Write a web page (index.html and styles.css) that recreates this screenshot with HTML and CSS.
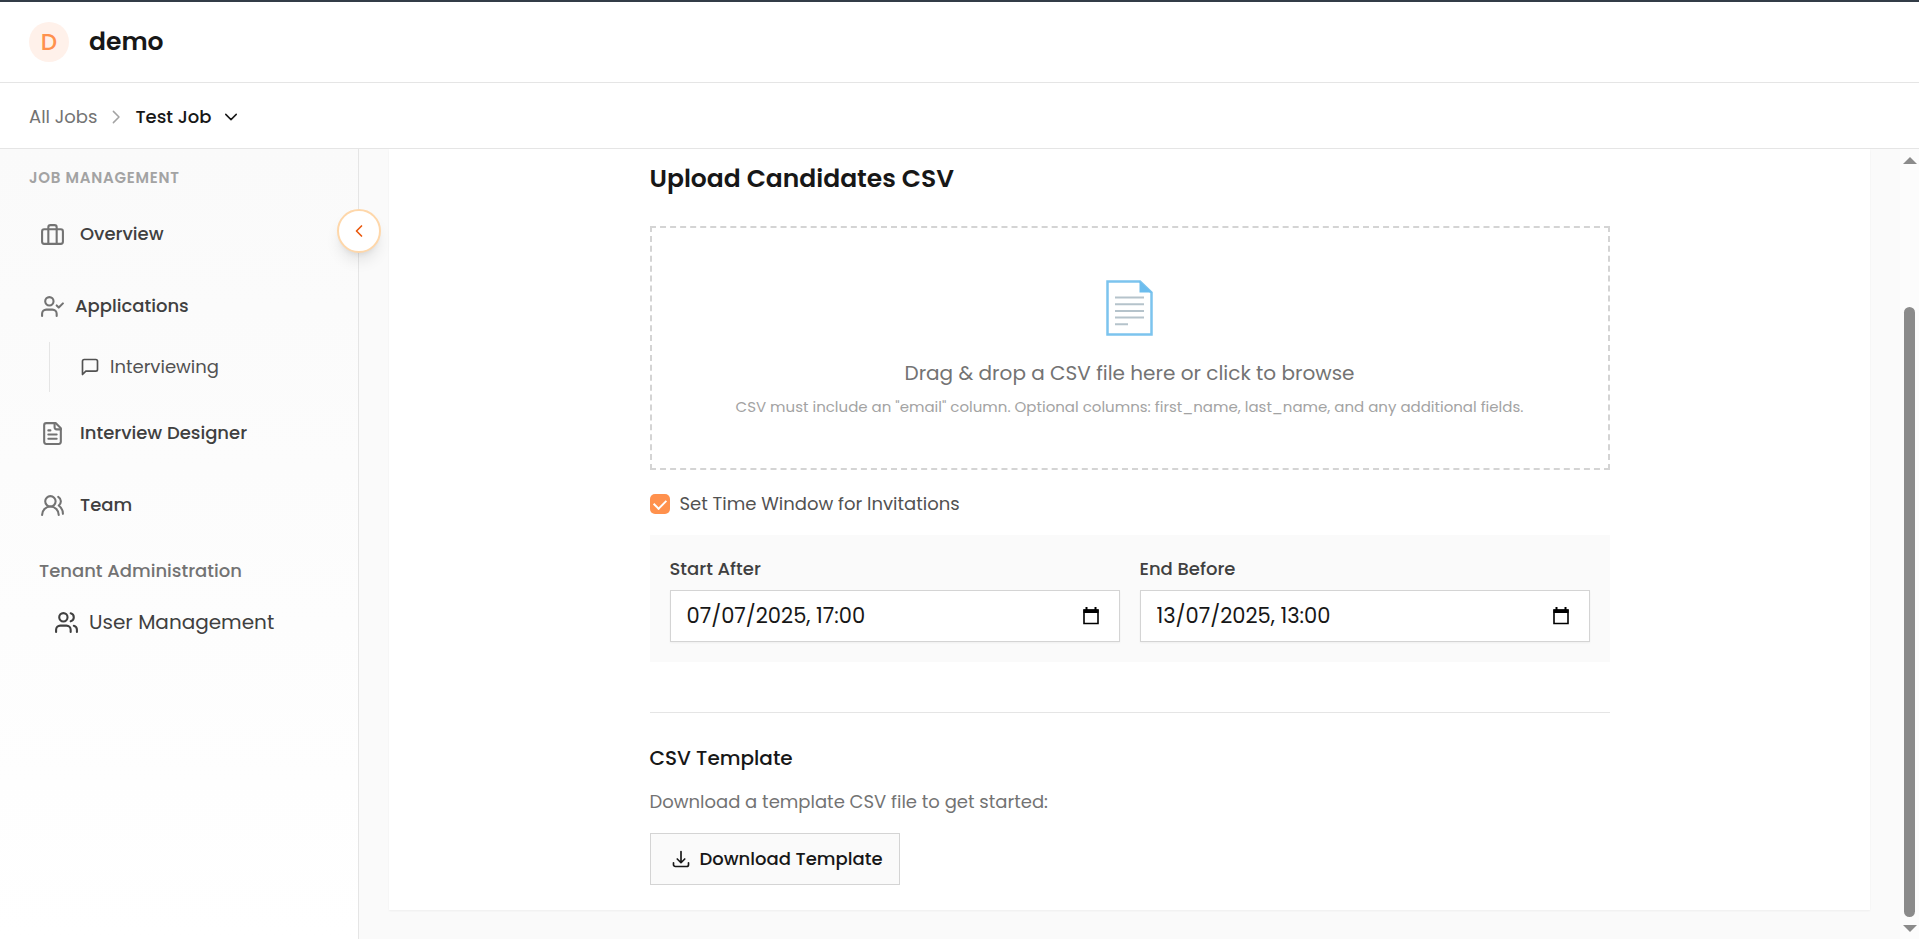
FILE: index.html
```html
<!DOCTYPE html>
<html lang="en">
<head>
<meta charset="utf-8">
<title>Test Job – Upload Candidates</title>
<link rel="stylesheet" href="styles.css">
</head>
<body>
<div class="app">
  <header class="topbar">
    <span class="avatar">D</span>
    <span class="tenant">demo</span>
  </header>

  <nav class="breadcrumb" aria-label="Breadcrumb">
    <a class="crumb" href="#jobs">All Jobs</a>
    <svg class="icon icon-sm crumb-sep" viewBox="0 0 24 24"><path d="m8.500 4.500 7.500 7.500-7.500 7.500"/></svg>
    <button class="crumb-current" type="button">
      Test Job
      <svg class="icon icon-sm" viewBox="0 0 24 24"><path d="m5 8.500 7 7 7-7"/></svg>
    </button>
  </nav>

  <div class="body">
    <aside class="sidebar">
      <h2 class="section-title">JOB MANAGEMENT</h2>
      <nav class="menu" aria-label="Job management">
        <a class="item" href="#overview">
          <svg class="icon" viewBox="0 0 24 24"><rect x="2" y="7" width="20" height="14" rx="2"/><path d="M16 21V5a2 2 0 0 0-2-2h-4a2 2 0 0 0-2 2v16"/></svg>
          Overview
        </a>
        <div class="group">
          <a class="item item-tight" href="#applications">
            <svg class="icon" viewBox="0 0 24 24"><path d="m16 11 2 2 4-4"/><path d="M16 21v-2a4 4 0 0 0-4-4H6a4 4 0 0 0-4 4v2"/><circle cx="9" cy="7" r="4"/></svg>
            Applications
          </a>
          <div class="submenu">
            <a class="subitem" href="#interviewing">
              <svg class="icon icon-md" viewBox="0 0 24 24"><path d="M21 15a2 2 0 0 1-2 2H7l-4 4V5a2 2 0 0 1 2-2h14a2 2 0 0 1 2 2z"/></svg>
              Interviewing
            </a>
          </div>
        </div>
        <a class="item" href="#designer">
          <svg class="icon" viewBox="0 0 24 24"><path d="M15 2H6a2 2 0 0 0-2 2v16a2 2 0 0 0 2 2h12a2 2 0 0 0 2-2V7Z"/><path d="M14 2v4a2 2 0 0 0 2 2h4"/><path d="M10 9H8"/><path d="M16 13H8"/><path d="M16 17H8"/></svg>
          Interview Designer
        </a>
        <a class="item" href="#team">
          <svg class="icon" viewBox="0 0 24 24"><path d="M18 21a8 8 0 0 0-16 0"/><circle cx="10" cy="8" r="5"/><path d="M22 20c0-3.370-2-6.500-4-8a5 5 0 0 0-.45-8.300"/></svg>
          Team
        </a>
      </nav>
      <h2 class="admin-title">Tenant Administration</h2>
      <a class="admin-item" href="#users">
        <svg class="icon" viewBox="0 0 24 24"><path d="M16 21v-2a4 4 0 0 0-4-4H6a4 4 0 0 0-4 4v2"/><circle cx="9" cy="7" r="4"/><path d="M22 21v-2a4 4 0 0 0-3-3.870"/><path d="M16 3.130a4 4 0 0 1 0 7.750"/></svg>
        User Management
      </a>
      <button class="collapse" type="button" aria-label="Collapse sidebar">
        <svg class="icon icon-md" viewBox="0 0 24 24"><path d="m15 18-6-6 6-6"/></svg>
      </button>
    </aside>

    <main class="main">
      <section class="card">
        <div class="content">
          <h1 class="title">Upload Candidates CSV</h1>

          <button class="dropzone" type="button">
            <svg class="doc" viewBox="0 0 47 56"><path d="M1.500 1.500H34L45.500 12.500V54.500H1.500Z" fill="#fff" stroke="#7cc4ee" stroke-width="2.500"/><path d="M33.500 1V12.500H46Z" fill="#6cbdee"/><path d="M9 17.500H38M9 24.200H38M9 30.900H38M9 37.600H38M9 44.300H22" stroke="#b5c3cb" stroke-width="2" fill="none"/></svg>
            <span class="drop-text">Drag &amp; drop a CSV file here or click to browse</span>
            <span class="drop-hint">CSV must include an "email" column. Optional columns: first_name, last_name, and any additional fields.</span>
          </button>

          <div class="check-row">
            <input class="check" type="checkbox" id="window" checked>
            <label for="window">Set Time Window for Invitations</label>
          </div>

          <div class="window">
            <div class="field">
              <label class="field-label" for="start">Start After</label>
              <div class="control">
                <input class="date" type="text" id="start" value="07/07/2025, 17:00">
                <button class="picker" type="button" aria-label="Pick start date"><svg class="cal" viewBox="0 0 16 18"><path d="M1 3H15V16.500H1Z" fill="none" stroke="#000" stroke-width="1.600"/><path d="M.5 2.500h15V6H.5ZM2.500 0h2v3h-2ZM11.500 0h2v3h-2Z" fill="#000"/></svg></button>
              </div>
            </div>
            <div class="field">
              <label class="field-label" for="end">End Before</label>
              <div class="control">
                <input class="date" type="text" id="end" value="13/07/2025, 13:00">
                <button class="picker" type="button" aria-label="Pick end date"><svg class="cal" viewBox="0 0 16 18"><path d="M1 3H15V16.500H1Z" fill="none" stroke="#000" stroke-width="1.600"/><path d="M.5 2.500h15V6H.5ZM2.500 0h2v3h-2ZM11.500 0h2v3h-2Z" fill="#000"/></svg></button>
              </div>
            </div>
          </div>

          <section class="template">
            <h2 class="template-title">CSV Template</h2>
            <p class="template-text">Download a template CSV file to get started:</p>
            <button class="download" type="button">
              <svg class="icon icon-md" viewBox="0 0 24 24"><path d="M3 16.500v2.250A2.250 2.250 0 0 0 5.250 21h13.500A2.250 2.250 0 0 0 21 18.750V16.500M16.500 12 12 16.500m0 0L7.500 12m4.500 4.500V3"/></svg>
              Download Template
            </button>
          </section>
        </div>
      </section>
    </main>

    <div class="scrollbar" aria-hidden="true">
      <span class="arrow arrow-up"></span>
      <span class="track"><span class="thumb"></span></span>
      <span class="arrow arrow-down"></span>
    </div>
  </div>
</div>
</body>
</html>
```
FILE: styles.css
```css
* { box-sizing: border-box; }

body {
  margin: 0;
  font-family: Poppins, Inter, sans-serif;
  font-size: 18px;
  line-height: 28px;
  color: #171717;
  background: #fff;
}

h1, h2, p { margin: 0; }
h1, h2 { font-weight: 500; }
a { color: inherit; text-decoration: none; }
button, input { font: inherit; color: inherit; }
button { padding: 0; border: 0; background: none; cursor: pointer; }

.app {
  display: flex;
  flex-direction: column;
  height: 100vh;
  overflow: hidden;
  border-top: 2px solid #323c47;
}

.icon {
  width: 25px;
  height: 25px;
  flex: none;
  fill: none;
  stroke: currentColor;
  stroke-width: 2;
  stroke-linecap: round;
  stroke-linejoin: round;
}
.icon-md { width: 20px; height: 20px; }
.icon-sm { width: 18px; height: 18px; }

/* Header */
.topbar {
  display: flex;
  align-items: center;
  gap: 20px;
  padding: 20px 29px;
  border-bottom: 1px solid #e5e5e5;
}
.avatar {
  width: 40px;
  height: 40px;
  line-height: 40px;
  border-radius: 50%;
  text-align: center;
  font-size: 23px;
  font-weight: 500;
  color: #ff914d;
  background: #fff1ea;
}
.tenant { font-size: 25px; line-height: 32px; font-weight: 600; }

.breadcrumb {
  display: flex;
  align-items: center;
  gap: 10px;
  padding: 20px 29px 17px;
  border-bottom: 1px solid #e5e5e5;
}
.crumb { color: #737373; }
.crumb-sep { color: #a3a3a3; }
.crumb-current {
  display: flex;
  align-items: center;
  gap: 10px;
  font-weight: 500;
}

.body { display: flex; flex: 1; min-height: 0; }

/* Sidebar */
.sidebar {
  position: relative;
  flex: none;
  width: 359px;
  padding: 15px 29px;
  border-right: 1px solid #e5e5e5;
  background: linear-gradient(#fafafa, #fff);
}
.section-title { font-size: 15px; font-weight: 600; letter-spacing: 0.05em; color: #a3a3a3; }
.menu { display: flex; flex-direction: column; gap: 20px; margin-top: 16px; }
.item {
  display: flex;
  align-items: center;
  gap: 15px;
  height: 52px;
  padding-left: 11px;
  font-weight: 500;
  color: #404040;
}
.item .icon { color: #737373; }
.item-tight { gap: 10px; }
.submenu {
  margin: 10px 0 -5px 20px;
  padding: 11px 0 11px 30px;
  border-left: 1px solid #e5e5e5;
}
.subitem { display: flex; align-items: center; gap: 10px; color: #525252; }
.admin-title { margin-top: 26px; padding-left: 10px; font-size: 18px; color: #737373; }
.admin-item {
  display: flex;
  align-items: center;
  gap: 10px;
  margin-top: 23px;
  padding-left: 25px;
  font-size: 20px;
  color: #404040;
}

.collapse {
  position: absolute;
  top: 60px;
  right: -23px;
  z-index: 1;
  display: flex;
  align-items: center;
  justify-content: center;
  width: 44px;
  height: 44px;
  border: 2px solid #fed7aa;
  border-radius: 50%;
  color: #ea580c;
  background: #fff;
  box-shadow: 0 10px 15px -3px #0000001a, 0 4px 6px -4px #0000001a;
}

/* Main panel */
.main { flex: 1; padding: 0 30px; background: #fafafa; }
.card {
  padding: 0 30px 25px;
  background: #fff;
  box-shadow: 0 1px 2px #0000000d;
}
.content { max-width: 960px; margin: 0 auto; }
.title { padding: 14px 0 31px; font-size: 25px; font-weight: 600; line-height: 32px; }

.dropzone {
  display: flex;
  flex-direction: column;
  align-items: center;
  width: 100%;
  padding: 52px 40px 47px;
  border: 2px dashed #d4d4d4;
}
.doc { width: 47px; height: 56px; }
.drop-text { margin-top: 22px; font-size: 20px; line-height: 30px; color: #737373; }
.drop-hint { margin-top: 5px; font-size: 15px; color: #a3a3a3; }

.check-row { display: flex; align-items: center; gap: 10px; margin: 20px 0 17px; color: #525252; }
.check {
  appearance: none;
  width: 20px;
  height: 20px;
  margin: 0;
  border-radius: 5px;
  background: #ff914d;
  display: grid;
  place-items: center;
}
.check:checked::before {
  content: "";
  width: 10px;
  height: 6px;
  margin-bottom: 3px;
  border: solid #fff;
  border-width: 0 0 2px 2px;
  transform: rotate(-45deg);
}

.window {
  display: grid;
  grid-template-columns: repeat(2, minmax(0, 1fr));
  gap: 20px;
  padding: 20px;
  background: #fafafa;
}
.field-label { display: block; margin-bottom: 7px; font-weight: 500; color: #404040; }
.control {
  display: flex;
  align-items: center;
  height: 52px;
  padding: 0 20px 0 16px;
  border: 1px solid #d4d4d4;
  background: #fff;
  box-shadow: 0 1px 2px #0000000d;
}
.date { flex: 1; min-width: 0; padding: 0; border: 0; outline: 0; background: none; font-size: 21px; }
.picker { display: flex; }
.cal { width: 16px; height: 18px; }

.template { margin-top: 50px; padding-top: 30px; border-top: 1px solid #e5e5e5; }
.template-title { font-size: 20px; line-height: 30px; }
.template-text { margin: 15px 0 17px; color: #737373; }
.download {
  display: flex;
  align-items: center;
  gap: 9px;
  height: 52px;
  padding: 0 16px 0 20px;
  border: 1px solid #d4d4d4;
  font-weight: 500;
  background: #fafafa;
}

/* Scrollbar */
.scrollbar {
  display: flex;
  flex-direction: column;
  align-items: center;
  flex: none;
  width: 19px;
  padding: 8px 0 7px;
  background: #fcfcfc;
}
.arrow { border: solid transparent; border-width: 0 7px; }
.arrow-up { border-bottom: 7px solid #8b8b8b; }
.arrow-down { border-top: 7px solid #8b8b8b; }
.track { display: flex; flex-direction: column; justify-content: flex-end; flex: 1; padding-bottom: 8px; }
.thumb { width: 11px; height: 81%; border-radius: 6px; background: #8b8b8b; }
```
